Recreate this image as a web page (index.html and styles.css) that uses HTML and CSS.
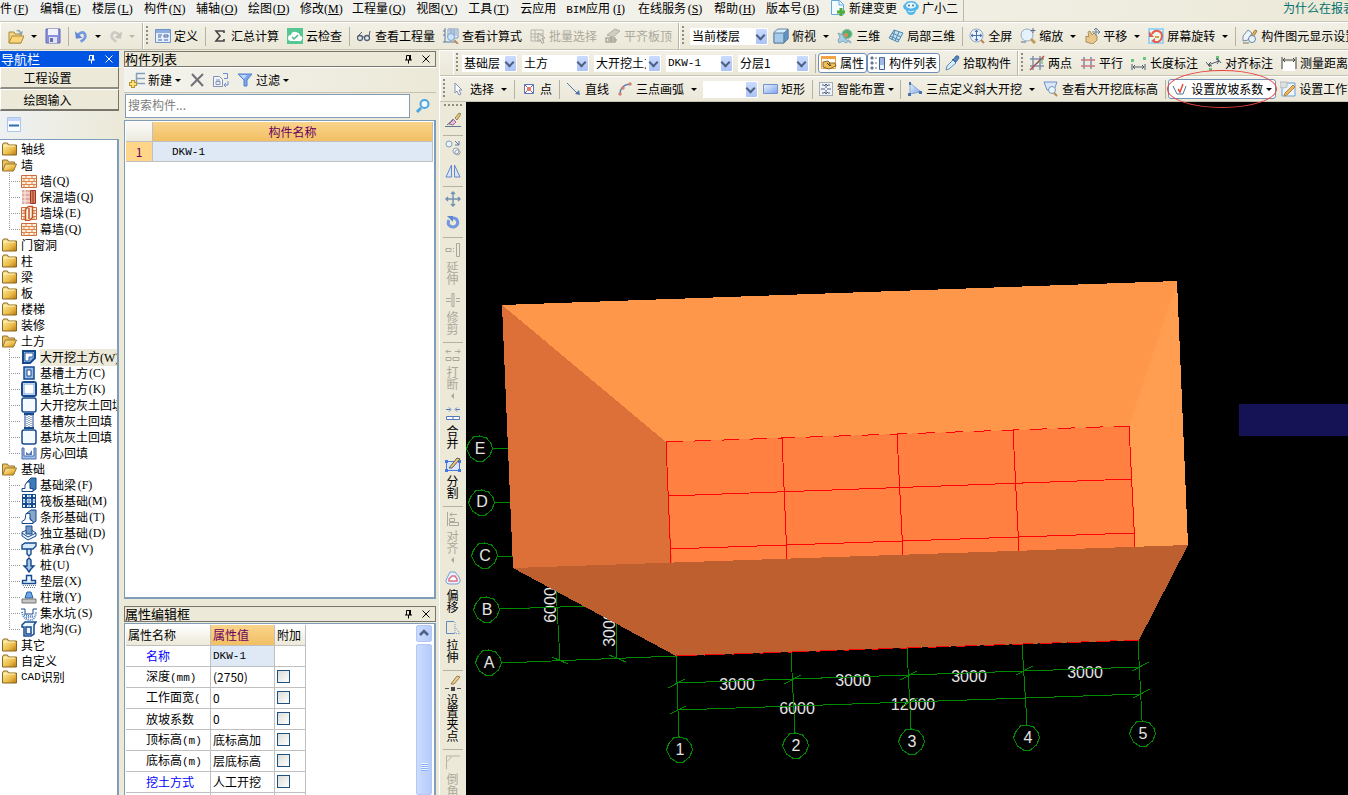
FILE: index.html
```html
<!DOCTYPE html>
<html lang="zh-CN">
<head>
<meta charset="utf-8">
<title>构件图元</title>
<link rel="stylesheet" href="styles.css">
</head>
<body>
<svg class="defs" aria-hidden="true">
<defs>
<linearGradient id="gold" x1="0" y1="0" x2="1" y2="1"><stop offset="0" stop-color="#fff0b0"/><stop offset=".6" stop-color="#ecbc48"/><stop offset="1" stop-color="#b87a10"/></linearGradient>
<linearGradient id="blue" x1="0" y1="0" x2="1" y2="1"><stop offset="0" stop-color="#e8f2ff"/><stop offset="1" stop-color="#7da2e8"/></linearGradient>
</defs>
<symbol id="open" viewBox="0 0 16 16"><path d="M1 4h5l1 2h6v9H1z" fill="#f3d483" stroke="#a98a45"/><path d="M1 15l3-7h12l-3 7z" fill="#fbd57a" stroke="#b08b3a"/><path d="M8 3q3-3 5 1l2-1-1 4-4-1 2-1q-1-2-4-2z" fill="#8ba5b5"/></symbol>
<symbol id="save" viewBox="0 0 16 16"><path d="M1 1h14v14H1z" fill="#8a8edb" stroke="#6568b5"/><path d="M3 1h10v6H3z" fill="#f1f3ff"/><path d="M4 9h8v6H4z" fill="#dfe2f0"/><path d="M5 10h3v4H5z" fill="#666cad"/></symbol>
<symbol id="undo" viewBox="0 0 14 16"><path d="M3 7q6-6 8 0q1 4-5 7" fill="none" stroke="#7599df" stroke-width="3"/><path d="M0 3l1 8 7-1z" fill="#6087d8"/></symbol>
<symbol id="redo" viewBox="0 0 14 16"><path d="M11 7q-6-6-8 0q-1 4 5 7" fill="none" stroke="#ccccc5" stroke-width="3"/><path d="M14 3l-1 8-7-1z" fill="#c5c5be"/></symbol>
<symbol id="form" viewBox="0 0 16 16"><path d="M.5 1.500h15v13H.5z" fill="#e5efff" stroke="#6e93cb"/><path d="M1 2h14v3H1z" fill="#8dadde"/><path d="M3 7h4M3 9h3M3 12h4M9 7h4v2H9zM9 12h4" fill="none" stroke="#46699c"/></symbol>
<symbol id="sigma" viewBox="0 0 16 16"><path d="M12 5V3H4l4 5-4 5h8v-2" fill="none" stroke="#444" stroke-width="1.600"/></symbol>
<symbol id="cloud" viewBox="0 0 16 16"><path d="M0 0h16v16H0z" fill="#55c795"/><path d="M4 13q-3 0-3-3t3-3q1-4 5-3t4 4q3 0 2 3t-3 2z" fill="#fff"/><path d="M5 9l2 2 4-4" fill="none" stroke="#4ab886" stroke-width="1.500"/></symbol>
<symbol id="glasses" viewBox="0 0 16 16"><circle cx="4" cy="10" r="2.500" fill="#e3ebf3" stroke="#555d70" stroke-width="1.300"/><circle cx="11" cy="10" r="2.500" fill="#e3ebf3" stroke="#555d70" stroke-width="1.300"/><path d="M6.500 9h2M2 8l4-4M13 8l1-5" stroke="#555d70" fill="none"/></symbol>
<symbol id="calc" viewBox="0 0 16 16"><path d="M2 0v14M0 14h14M2 3H0M2 7H0" stroke="#5879a8" fill="none"/><path d="M5 1h10v9H5z" fill="#e9f1fa" stroke="#8899b5"/><path d="M6 3h8M6 5h8M6 7h8M8 1v9M11 1v9" stroke="#8aa5c5" fill="none"/><circle cx="8" cy="9" r="3.500" fill="#cde3fb" stroke="#7ba5d0"/><path d="M11 12l4 4" stroke="#ba915d" stroke-width="2"/></symbol>
<symbol id="batch" viewBox="0 0 16 16"><path d="M1 2h12v11H1zM1 6h12M1 9h12M5 2v11" fill="none" stroke="#b6b4a9"/><path d="M8 5l7 5-3 .5 2 4-2 1-2-4-2 2z" fill="#e4e2d6" stroke="#aaa89d"/></symbol>
<symbol id="slab" viewBox="0 0 16 16"><path d="M2 7l8-6 5 2-7 6z" fill="#d1cec2" stroke="#b0aea4"/><path d="M1 14h9v-4H1zM3 12h9M6 9v5" fill="none" stroke="#aaa89d" stroke-width="1.500"/></symbol>
<symbol id="cube" viewBox="0 0 16 16"><path d="M1 4l4-3h10v10l-4 4H1z" fill="#d3ecfb" stroke="#6a88aa"/><path d="M1 5h10v10H1z" fill="#a5cbea" stroke="#66829e"/><path d="M11 5l4-4v10l-4 4z" fill="#5f92c8" stroke="#66829e"/></symbol>
<symbol id="orbit" viewBox="0 0 16 16"><ellipse cx="10" cy="6" rx="5" ry="4.500" fill="#4fae72" stroke="#8fb9a4"/><path d="M1 5l5 2 2 4 4 2-3 2-3-2-4 2-1-3 2-3z" fill="#a9cfe4" stroke="#7ea7c0"/><circle cx="9" cy="7" r="2" fill="#e68852"/><path d="M11 12l3 3" stroke="#96b4c7" stroke-width="2"/></symbol>
<symbol id="cubes" viewBox="0 0 16 16"><path d="M1 10l5-8 9 3-5 9z" fill="#c5e2f2" stroke="#4f88aa"/><path d="M4 5l9 4M7 2l-3 10M11 4l-4 9M2 8l9 4" stroke="#4f88aa" fill="none"/></symbol>
<symbol id="full" viewBox="0 0 16 16"><circle cx="7.500" cy="7.500" r="6.500" fill="#e9f4ff" stroke="#9aa5b8"/><path d="M7.500 2v11M2 7.500h11M6 4l1.500-2L9 4M6 11l1.500 2L9 11M4 6L2 7.500 4 9M11 6l2 1.500L11 9" fill="none" stroke="#486db1"/><path d="M12 12l3 3" stroke="#bd854e" stroke-width="2"/></symbol>
<symbol id="zoomer" viewBox="0 0 16 16"><circle cx="7" cy="7" r="6" fill="#e4f2fd" stroke="#9cabbb"/><path d="M11 11l4 4" stroke="#c09b5d" stroke-width="3"/><path d="M13 0v5M10.500 2.500h5M1 14h5" stroke="#586b87" fill="none"/></symbol>
<symbol id="pan" viewBox="0 0 16 16"><path d="M2 14V8l3 1-1-5 2-1 2 4 2-2 3 3v4l-4 4z" fill="#ebc889" stroke="#a59165"/><path d="M12 0v8M8 4h8M10 2l2-2 2 2M14 2l2 2-2 2" stroke="#6f8698" fill="none"/></symbol>
<symbol id="rotate" viewBox="0 0 16 16"><path d="M0 0h16v16H0z" fill="#9bd5f1"/><path d="M2 2h12v12H2z" fill="#edf8e9"/><path d="M4 6q2-4 6-3t4 5-4 6H6" stroke="#e65c55" stroke-width="2" fill="none"/><path d="M1 3v6h5zM3 13l4-3v5z" fill="#e65c55"/><path d="M7 9h4" stroke="#df9a3d" stroke-width="2"/></symbol>
<symbol id="show" viewBox="0 0 16 16"><path d="M1 8l5-6 4 3-4 7-5 1z" fill="#eef5f8" stroke="#718da4"/><path d="M8 10l5-8 2 1-5 8z" fill="#efba5a" stroke="#9c7a42"/><circle cx="10" cy="11" r="3.500" fill="#e7f3fb" stroke="#6685a4"/><path d="M1 15h6" stroke="#777"/></symbol>
<symbol id="prop" viewBox="0 0 16 16"><path d="M.5 1.500h14v12H.5z" fill="#fff" stroke="#f0a23b"/><path d="M0 1h15v3H0z" fill="#f2a443"/><path d="M2 7l5-1 2 2h5l1 3-7 3-6-2z" fill="#efbf55" stroke="#80662f"/><path d="M6 8l3 3M8 8l2 3" stroke="#59472a"/></symbol>
<symbol id="list" viewBox="0 0 16 16"><path d="M1 2h2v2H1zM1 7h2v2H1zM1 12h2v2H1zM5 3h2M5 8h2M5 13h2" fill="#68778e" stroke="#68778e"/><path d="M9.500 2.500h5v12h-5z" fill="#e5efff" stroke="#42628f"/><path d="M10 5h4M10 7h4M10 9h4M10 3h4" stroke="#5b84c5"/></symbol>
<symbol id="dropper" viewBox="0 0 16 16"><path d="M2 15l1-4 6-6 3 3-7 6z" fill="#d7edfb" stroke="#5e8cb4"/><path d="M8 4l4 4M9 5l3-4q3-1 3 2l-3 4z" fill="#5587bf" stroke="#3e6ca0"/></symbol>
<symbol id="two" viewBox="0 0 16 16"><path d="M4 1v14M11 1v14M1 4h14M1 11h14" stroke="#8390ad" stroke-width="1.500"/><path d="M1 15L15 1" stroke="#b44d4d" stroke-width="1.500"/><path d="M8 9l5-5v5" stroke="#55a56b" fill="none"/></symbol>
<symbol id="parallel" viewBox="0 0 16 16"><path d="M4 2v12M11 2v12" stroke="#788db4" stroke-width="1.500"/><path d="M1 5h14M1 11h14" stroke="#cf777b" stroke-width="1.500"/></symbol>
<symbol id="length" viewBox="0 0 16 16"><path d="M0 4h3v3H0zM12 2h3v3h-3z" fill="#66c779"/><path d="M1 9v6M14 9v6M2 12h11M4 10l-2 2 2 2M11 10l2 2-2 2" fill="none" stroke="#4f5c6d"/></symbol>
<symbol id="aligned" viewBox="0 0 16 16"><path d="M10 1h3v3h-3zM3 13h3v3H3z" fill="#66c779"/><path d="M0 7l4 5M11 3l4 5M2 10l11-4M5 7l-3 3 4 1M10 4l3 2-2 3" fill="none" stroke="#4f5c6d"/></symbol>
<symbol id="measure" viewBox="0 0 16 16"><path d="M2 7h12v9H2z" fill="#fff"/><path d="M1 2v12M15 2v12M2 5h12M4 3L2 5l2 2M12 3l2 2-2 2" fill="none" stroke="#444"/></symbol>
<symbol id="cursor" viewBox="0 0 16 16"><path d="M4 2v10l2-2 2 4 2-1-2-4h3z" fill="#fff" stroke="#8192b3"/></symbol>
<symbol id="point" viewBox="0 0 16 16"><path d="M3.500 3.500h9v9h-9z" fill="#fff" stroke="#6073c3"/><path d="M4 4l8 8M12 4l-8 8" stroke="#666"/><path d="M6 6h4v4H6z" fill="#e87869"/></symbol>
<symbol id="line" viewBox="0 0 16 16"><path d="M1 2l11 11" stroke="#5374a5"/><path d="M14 14l-1-5-4 4z" fill="#5374a5"/></symbol>
<symbol id="arc" viewBox="0 0 16 16"><path d="M3 13Q3 4 13 3" stroke="#6789b7" stroke-width="1.500" fill="none"/><path d="M2 12h2v2H2zM5 6h2v2H5zM12 2h2v2h-2z" fill="#f2b5a5" stroke="#cb7065"/></symbol>
<symbol id="rect" viewBox="0 0 16 16"><path d="M1.500 3.500h14v9h-14z" fill="url(#blue)" stroke="#7392d2"/></symbol>
<symbol id="smart" viewBox="0 0 16 16"><path d="M1.500 1.500h13v13h-13z" fill="#eef4fa" stroke="#59687c" stroke-dasharray="1 1"/><path d="M8 3v4M8 9v4M3 8h4M9 8h4M4 4h2M10 4h2M4 12h2M10 12h2M6 5l2-2 2 2M6 11l2 2 2-2" fill="none" stroke="#4e5f78"/></symbol>
<symbol id="slope" viewBox="0 0 16 16"><path d="M3 2v11l11-2z" fill="url(#blue)" stroke="#8ba6cd"/><path d="M2 1h2v3H2zM1 12h3v3H1zM12 10h3v3h-3z" fill="#4c70ac"/></symbol>
<symbol id="look" viewBox="0 0 16 16"><path d="M1 1h13l-3 8H4z" fill="#d9e7fb" stroke="#6e8fca"/><circle cx="9" cy="9" r="3.500" fill="#e6f4ff" stroke="#8095ae"/><path d="M11 12l3 3" stroke="#b48a57" stroke-width="2"/></symbol>
<symbol id="coef" viewBox="0 0 16 16"><path d="M1 5l4 8h6l3-8" fill="none" stroke="#51739e"/><path d="M6 8l2 3 3-8" fill="none" stroke="#e34f3c" stroke-width="1.500"/></symbol>
<symbol id="worksetup" viewBox="0 0 16 16"><path d="M2 2h13v13H2z" fill="#eaf5ff" stroke="#69a2d2"/><path d="M5 12l8-8 2 2-8 8-3 1z" fill="#edb45f" stroke="#b78443"/><path d="M0 1h7v5q-3 2-7 0z" fill="#dce1e2" stroke="#b5babc"/></symbol>
<symbol id="newdoc" viewBox="0 0 16 16"><path d="M1.500.5h8l4 4v10h-12z" fill="#f2fbff" stroke="#65a8dc"/><path d="M9 1v4h4" fill="none" stroke="#65a8dc"/><path d="M11 8v8M7 12h8" stroke="#50ad35" stroke-width="3"/></symbol>
<symbol id="bot" viewBox="0 0 16 16"><path d="M2 4Q3 1 8 1t6 3q3 1 1 5l-2 1q-1 5-5 5t-5-5L1 9Q-1 5 2 4z" fill="#51b5ec"/><ellipse cx="8" cy="5.500" rx="5" ry="3" fill="#e9f8ff"/><circle cx="6" cy="5.500" r="1" fill="#36749c"/><circle cx="10" cy="5.500" r="1" fill="#36749c"/><path d="M5 11q3 2 6 0" fill="none" stroke="#d9f3ff"/></symbol>
<symbol id="pin" viewBox="0 0 10 10"><path d="M2 6h7M3.500 6V1.500h4V6M5.500 6v3.500" fill="none" stroke="currentColor"/><path d="M6 1h2v5H6z" fill="currentColor"/></symbol>
<symbol id="close" viewBox="0 0 10 10"><path d="M1.500 1.500l7 7M8.500 1.500l-7 7" stroke="currentColor"/></symbol>
<symbol id="add" viewBox="0 0 16 16"><path d="M7 1.500h9M7 6.500h9M7 11.500h9M7.500 1v11" stroke="#84a0bb" stroke-width="1.500"/><path d="M4 8v8M0 12h8" stroke="#b9922a" stroke-width="4"/><path d="M4 9v6M1 12h6" stroke="#ffe07b" stroke-width="2"/></symbol>
<symbol id="delete" viewBox="0 0 16 16"><path d="M3 2l11 12M14 2L2 14" stroke="#707078" stroke-width="2"/></symbol>
<symbol id="copydoc" viewBox="0 0 16 16"><path d="M.5 4.500h6l3 3v7h-9zM3 8h4M3 9.500h4v3H3z" fill="#f0f4ff" stroke="#8594ad"/><path d="M10 1.500h4.500v5H11M12 13h3V9M13 11l-2 2 2 2" fill="none" stroke="#718bcd"/></symbol>
<symbol id="funnel" viewBox="0 0 16 16"><path d="M1 2h14l-5 6v6H7V8z" fill="#7da5ea" stroke="#5580cc"/><path d="M3 3h7l-3 4z" fill="#bfd7ff"/></symbol>
<symbol id="search" viewBox="0 0 16 16"><circle cx="9.500" cy="6" r="4" fill="#f3fbff" stroke="#4da4e3" stroke-width="2"/><path d="M6 10l-4 4" stroke="#4da4e3" stroke-width="3"/></symbol>
<symbol id="collapse" viewBox="0 0 16 16"><path d="M1.500.5h13v14h-13z" fill="#f8fbff" stroke="#aec5ed"/><path d="M2 1h12v3H2z" fill="#c5d8fc"/><path d="M3 8.500h10" stroke="#346fac" stroke-width="2"/></symbol>
<symbol id="folder" viewBox="0 0 16 16"><path d="M1.500 4l1-2h4l1 2h8v10h-14z" fill="url(#gold)" stroke="#87661f"/><path d="M2 5h12" stroke="#fff1b3"/></symbol>
<symbol id="fopen" viewBox="0 0 16 16"><path d="M1.500 14V3h5l1 2h6v3" fill="#eac15f" stroke="#99752c"/><path d="M1.500 14l3-7h11l-3 7z" fill="url(#gold)" stroke="#99752c"/></symbol>
<symbol id="brick" viewBox="0 0 16 16"><path d="M.5 2.500h15v12H.5z" fill="#fff2db" stroke="#cb6b3d"/><path d="M1 5.500h14M1 8.500h14M1 11.500h14M5 3v3M11 3v3M3 6v3M8 6v3M13 6v3M5 9v3M11 9v3M3 12v3M8 12v3M13 12v3" stroke="#dd8350"/></symbol>
<symbol id="warm" viewBox="0 0 16 16"><path d="M1 1h8v14H1z" fill="#dfaba2"/><path d="M1 4h8M1 8h8M1 12h8M4 1v14" stroke="#fff0e7"/><path d="M9.500 1.500h5v13h-5zM12 1v14" fill="#d98859" stroke="#9b342b"/></symbol>
<symbol id="pier" viewBox="0 0 16 16"><use href="#brick"/><path d="M4.500 4.500l3-3h4v11l-3 3h-4zM8 3v11" fill="#fff4e3" stroke="#c15428" stroke-width="1.500"/></symbol>
<symbol id="pit1" viewBox="0 0 16 16"><path d="M2 2h12v7l-5 5H2z" fill="#8fb5e0" stroke="#16498e" stroke-width="2"/><path d="M4 4h8v4H8v4H4z" fill="#fff" stroke="#2c62a5"/></symbol>
<symbol id="slot" viewBox="0 0 16 16"><path d="M3 2h10v12H3z" fill="#98bce8" stroke="#16498e" stroke-width="1.500"/><path d="M6 5h4v6H6z" fill="#fff" stroke="#16498e"/></symbol>
<symbol id="pit" viewBox="0 0 16 16"><rect x="1" y="1" width="14" height="14" rx="2" fill="#fff" stroke="#16498e" stroke-width="2"/><path d="M3 3h10v10H3z" fill="none" stroke="#79a5da"/></symbol>
<symbol id="fillpit" viewBox="0 0 16 16"><rect x="1" y="1" width="14" height="14" rx="2" fill="#f5faff" stroke="#16498e" stroke-width="1.500"/></symbol>
<symbol id="fillslot" viewBox="0 0 16 16"><path d="M4 1h8v14H4z" fill="#fff" stroke="#16498e"/><path d="M6 2v12M8 3v12M10 2v12" stroke="#385f8b" stroke-dasharray="1 1"/><path d="M3 1h10M3 15h10" stroke="#16498e" stroke-width="2"/></symbol>
<symbol id="room" viewBox="0 0 16 16"><path d="M1 3v11h14V3h-2v8H3V3z" fill="#9fbbe7" stroke="#4a6cab"/><path d="M5 7l3 2 3-4v5H5z" fill="#5579b8"/></symbol>
<symbol id="beam" viewBox="0 0 16 16"><path d="M5 6l5-5h5v11l-3 2z" fill="#3f7cb8" stroke="#16498e"/><path d="M1 14.500v-3h3V8l2-3h3v6.500h3v3z" fill="#fff" stroke="#16498e"/></symbol>
<symbol id="raft" viewBox="0 0 16 16"><path d="M1.500 1.500h13v13h-13z" fill="#eaf5ff" stroke="#16498e"/><path d="M5 1v14M11 1v14M1 5h14M1 11h14" stroke="#16498e" stroke-width="2"/><path d="M8 2v12M2 8h12" stroke="#5f8fc4"/></symbol>
<symbol id="strip" viewBox="0 0 16 16"><path d="M6 4l4-3h5v11l-3 2z" fill="#86a8c9" stroke="#16498e"/><path d="M1 14.500v-2l3-2 1-6h4v6l3 2v2z" fill="#fff" stroke="#16498e"/></symbol>
<symbol id="isolated" viewBox="0 0 16 16"><path d="M1 7l8-3 6 4v3l-8 4-6-4z" fill="#edf6ff" stroke="#16498e"/><path d="M5 1h6v8H5z" fill="#719ac2" stroke="#16498e"/><path d="M1 8l6 4 8-4" fill="none" stroke="#16498e"/></symbol>
<symbol id="cap" viewBox="0 0 16 16"><path d="M1 4l3-2h11v3l-3 3H1zM6 8h4v5l-2 2-2-2z" fill="#d8e9f9" stroke="#16498e" stroke-width="1.400"/></symbol>
<symbol id="pile" viewBox="0 0 16 16"><path d="M6 3l2-2 2 2v6h3l-3 3-2 3-2-3-3-3h3z" fill="#a4c7e7" stroke="#16498e" stroke-width="1.400"/></symbol>
<symbol id="cushion" viewBox="0 0 16 16"><path d="M5.500 2.500h5v5h4v3h-13v-3h4z" fill="#e9f4ff" stroke="#16498e" stroke-width="1.400"/><path d="M2 12.500h13M3 14.500h11" stroke="#657c99" stroke-dasharray="1 1"/></symbol>
<symbol id="pedestal" viewBox="0 0 16 16"><path d="M6 3h4l2 6H4z" fill="#6ea6e8" stroke="#235ea0"/><path d="M1 10h14v4H1z" fill="#c5c5c5" stroke="#777"/></symbol>
<symbol id="sump" viewBox="0 0 16 16"><path d="M0 4h4v5h8V4h4" fill="none" stroke="#16498e"/><path d="M1 7q1 7 7 8t7-8M3 10l9 2M5 13l7-2" fill="none" stroke="#4c7ebd" stroke-width="2" stroke-dasharray="1 1"/></symbol>
<symbol id="trench" viewBox="0 0 16 16"><path d="M1 4l3-3h11l-2 3v9l-3 2H3V6H1zM5 6h5v7H5z" fill="#edf6ff" stroke="#16498e" stroke-width="1.500"/></symbol>
<symbol id="erase" viewBox="0 0 16 16"><path d="M0 14.500h16" stroke="#62789b"/><path d="M10 6l4-5 2 1-4 6z" fill="#f1ca68" stroke="#8a8264"/><path d="M8 7l3 3-3 3-4-1z" fill="#f3b9d6" stroke="#8d7493"/><path d="M2 13l6-5" stroke="#5c6680"/></symbol>
<symbol id="copy" viewBox="0 0 16 16"><circle cx="4" cy="4" r="3" fill="#eef5ff" stroke="#849ac0"/><circle cx="11" cy="11" r="3" fill="#eef5ff" stroke="#98a0ac"/><circle cx="12.500" cy="12.500" r="2.500" fill="none" stroke="#98a0ac"/><path d="M10 1l4 4M14 1v4h-4" stroke="#567cae" fill="none"/></symbol>
<symbol id="mirror" viewBox="0 0 16 16"><path d="M6.500 2v12H1zM9.500 2v12H15z" fill="#d7e5ff" stroke="#6687ca"/></symbol>
<symbol id="move" viewBox="0 0 16 16"><path d="M8 1v14M1 8h14M6 3l2-2 2 2M6 13l2 2 2-2M3 6L1 8l2 2M13 6l2 2-2 2" fill="none" stroke="#7290b1" stroke-width="1.400"/></symbol>
<symbol id="turn" viewBox="0 0 16 16"><path d="M4 6q-2 4 1 6t6 0q3-3 1-6-1-2-4-2" fill="none" stroke="#7296df" stroke-width="3"/><path d="M2 2h6v6z" fill="#6186d0"/></symbol>
<symbol id="extend" viewBox="0 0 16 16"><path d="M1 6.500h5v3H1zM8 6.500h1M8 9.500h1M11.500 1.500h3v13h-3z" fill="none" stroke="#aaa89d"/></symbol>
<symbol id="trim" viewBox="0 0 16 16"><path d="M1 6.500h5M1 9.500h5M11 6.500h4M11 9.500h4M7 1.500h2v13H7z" fill="none" stroke="#aaa89d"/></symbol>
<symbol id="break" viewBox="0 0 16 16"><path d="M1 4.500h5M10 4.500h5M3 2.500l-2 2 2 2M13 2.500l2 2-2 2M1 10.500h5v3H1zM8 10.500h6v3H8z" fill="none" stroke="#aaa89d"/></symbol>
<symbol id="merge" viewBox="0 0 16 16"><path d="M1 3.500h4M15 3.500h-4M4 1.500l2 2-2 2M12 1.500l-2 2 2 2M1.500 10.500h13v3h-13zM8 10v3" fill="#fff" stroke="#5278bb"/></symbol>
<symbol id="split" viewBox="0 0 16 16"><path d="M1.500 5.500h13v9h-13z" fill="#d8e7ff" stroke="#4776dc"/><path d="M0 4h3v3H0zM0 13h3v3H0zM13 4h3v3h-3zM13 13h3v3h-3z" fill="#4776dc"/><path d="M4 12l8-10 3 1-8 9z" fill="#efc575" stroke="#5e5c58"/></symbol>
<symbol id="align" viewBox="0 0 16 16"><path d="M2.500 1v14M5 3.500h7M7 1.500l-2 2 2 2M4.500 7.500h5v3h-5zM4.500 11.500h9v3h-9z" fill="none" stroke="#aaa89d"/></symbol>
<symbol id="offset" viewBox="0 0 16 16"><path d="M5 2h5l4 5q3 6-2 7H4q-5-1-2-6z" fill="#e6f1ff" stroke="#7e9dcd"/><path d="M7 6h3l2 3v2H4V9z" fill="#fff" stroke="#dd7185" stroke-width="1.500"/></symbol>
<symbol id="stretch" viewBox="0 0 16 16"><path d="M9 1.500H1.500v12H9" fill="none" stroke="#5f8ac4"/><path d="M10 2v12M9 13.500h6L10 7" fill="none" stroke="#779acc" stroke-dasharray="1 1"/></symbol>
<symbol id="grippt" viewBox="0 0 16 16"><path d="M0 13.500h4M12 13.500h4" stroke="#555"/><path d="M6 12h4v4H6z" fill="#444"/><path d="M6 9l6-8 3 1-6 7z" fill="#f2d18a" stroke="#98784b"/></symbol>
<symbol id="chamfer" viewBox="0 0 16 16"><path d="M1.500 15V8l6-6H15M1.500 7V2H7" fill="none" stroke="#b4b2a7"/></symbol>
</svg>

<div class="app">
<header>
<nav class="menu">
<div class="menu-items">
<button>件<span class="key">(<u>F</u>)</span></button><button>编辑<span class="key">(<u>E</u>)</span></button><button>楼层<span class="key">(<u>L</u>)</span></button><button>构件<span class="key">(<u>N</u>)</span></button><button>辅轴<span class="key">(<u>O</u>)</span></button><button>绘图<span class="key">(<u>D</u>)</span></button><button>修改<span class="key">(<u>M</u>)</span></button><button>工程量<span class="key">(<u>Q</u>)</span></button><button>视图<span class="key">(<u>V</u>)</span></button><button>工具<span class="key">(<u>T</u>)</span></button><button>云应用</button><button><span class="mono">BIM</span>应用<span class="key">(<u>I</u>)</span></button><button>在线服务<span class="key">(<u>S</u>)</span></button><button>帮助<span class="key">(<u>H</u>)</span></button><button>版本号<span class="key">(<u>B</u>)</span></button><button class="pic"><svg><use href="#newdoc"/></svg>新建变更</button><button class="pic"><svg><use href="#bot"/></svg>广小二</button>
</div>
<a class="hint" href="#faq">为什么在报表</a>
</nav>
<div class="bar top">
<div class="group first">
<button class="tb" aria-label="打开"><svg><use href="#open"/></svg><i class="arr"></i></button>
<button class="tb" aria-label="保存"><svg><use href="#save"/></svg></button><span class="sep"></span>
<button class="tb" aria-label="撤销"><svg class="narrow"><use href="#undo"/></svg><i class="arr"></i></button>
<button class="tb" aria-label="恢复" disabled><svg class="narrow"><use href="#redo"/></svg><i class="arr"></i></button>
</div>
<div class="group"><span class="grip"></span>
<button class="tb"><svg><use href="#form"/></svg>定义</button><span class="sep"></span>
<button class="tb"><svg><use href="#sigma"/></svg>汇总计算</button>
<button class="tb"><svg><use href="#cloud"/></svg>云检查</button><span class="sep"></span>
<button class="tb"><svg><use href="#glasses"/></svg>查看工程量</button>
<button class="tb"><svg><use href="#calc"/></svg>查看计算式</button>
<button class="tb" disabled><svg><use href="#batch"/></svg>批量选择</button>
<button class="tb" disabled><svg><use href="#slab"/></svg>平齐板顶</button>
</div>
<div class="group last"><span class="grip"></span>
<span class="combo w78"><select aria-label="楼层范围"><option>当前楼层</option></select></span>
<button class="tb"><svg><use href="#cube"/></svg>俯视<i class="arr"></i></button>
<button class="tb"><svg><use href="#orbit"/></svg>三维</button>
<button class="tb"><svg><use href="#cubes"/></svg>局部三维</button><span class="sep"></span>
<button class="tb"><svg><use href="#full"/></svg>全屏</button>
<button class="tb"><svg><use href="#zoomer"/></svg>缩放<i class="arr"></i></button>
<button class="tb"><svg><use href="#pan"/></svg>平移<i class="arr"></i></button>
<button class="tb"><svg><use href="#rotate"/></svg>屏幕旋转<i class="arr"></i></button><span class="sep"></span>
<button class="tb"><svg><use href="#show"/></svg>构件图元显示设置</button>
</div>
</div>
</header>

<main class="body">
<aside class="nav">
<h2 class="title active"><span>导航栏</span><button aria-label="固定"><svg><use href="#pin"/></svg></button><button aria-label="关闭"><svg><use href="#close"/></svg></button></h2>
<button class="tab">工程设置</button>
<button class="tab pressed">绘图输入</button>
<div class="navtools"><button aria-label="折叠"><svg><use href="#collapse"/></svg></button></div>
<ul class="tree">
<li><a href="#t"><svg><use href="#folder"/></svg>轴线</a></li>
<li><a href="#t"><svg><use href="#fopen"/></svg>墙</a>
<ul>
<li><a href="#t"><svg><use href="#brick"/></svg>墙<span class="key">(Q)</span></a></li>
<li><a href="#t"><svg><use href="#warm"/></svg>保温墙<span class="key">(Q)</span></a></li>
<li><a href="#t"><svg><use href="#pier"/></svg>墙垛<span class="key">(E)</span></a></li>
<li><a href="#t"><svg><use href="#brick"/></svg>幕墙<span class="key">(Q)</span></a></li>
</ul></li>
<li><a href="#t"><svg><use href="#folder"/></svg>门窗洞</a></li>
<li><a href="#t"><svg><use href="#folder"/></svg>柱</a></li>
<li><a href="#t"><svg><use href="#folder"/></svg>梁</a></li>
<li><a href="#t"><svg><use href="#folder"/></svg>板</a></li>
<li><a href="#t"><svg><use href="#folder"/></svg>楼梯</a></li>
<li><a href="#t"><svg><use href="#folder"/></svg>装修</a></li>
<li><a href="#t"><svg><use href="#fopen"/></svg>土方</a>
<ul>
<li><a href="#t"><svg><use href="#pit1"/></svg><span class="sel">大开挖土方<span class="key">(W)</span></span></a></li>
<li><a href="#t"><svg><use href="#slot"/></svg>基槽土方<span class="key">(C)</span></a></li>
<li><a href="#t"><svg><use href="#pit"/></svg>基坑土方<span class="key">(K)</span></a></li>
<li><a href="#t"><svg><use href="#fillpit"/></svg>大开挖灰土回填</a></li>
<li><a href="#t"><svg><use href="#fillslot"/></svg>基槽灰土回填</a></li>
<li><a href="#t"><svg><use href="#fillpit"/></svg>基坑灰土回填</a></li>
<li><a href="#t"><svg><use href="#room"/></svg>房心回填</a></li>
</ul></li>
<li><a href="#t"><svg><use href="#fopen"/></svg>基础</a>
<ul>
<li><a href="#t"><svg><use href="#beam"/></svg>基础梁<span class="key">(F)</span></a></li>
<li><a href="#t"><svg><use href="#raft"/></svg>筏板基础<span class="key">(M)</span></a></li>
<li><a href="#t"><svg><use href="#strip"/></svg>条形基础<span class="key">(T)</span></a></li>
<li><a href="#t"><svg><use href="#isolated"/></svg>独立基础<span class="key">(D)</span></a></li>
<li><a href="#t"><svg><use href="#cap"/></svg>桩承台<span class="key">(V)</span></a></li>
<li><a href="#t"><svg><use href="#pile"/></svg>桩<span class="key">(U)</span></a></li>
<li><a href="#t"><svg><use href="#cushion"/></svg>垫层<span class="key">(X)</span></a></li>
<li><a href="#t"><svg><use href="#pedestal"/></svg>柱墩<span class="key">(Y)</span></a></li>
<li><a href="#t"><svg><use href="#sump"/></svg>集水坑<span class="key">(S)</span></a></li>
<li><a href="#t"><svg><use href="#trench"/></svg>地沟<span class="key">(G)</span></a></li>
</ul></li>
<li><a href="#t"><svg><use href="#folder"/></svg>其它</a></li>
<li><a href="#t"><svg><use href="#folder"/></svg>自定义</a></li>
<li><a href="#t"><svg><use href="#folder"/></svg><span class="mono">CAD</span>识别</a></li>
</ul>
</aside>

<section class="panels">
<h2 class="title"><span>构件列表</span><button aria-label="固定"><svg><use href="#pin"/></svg></button><button aria-label="关闭"><svg><use href="#close"/></svg></button></h2>
<div class="listtools">
<button class="tb tight"><svg><use href="#add"/></svg>新建<i class="arr"></i></button>
<button class="tb" aria-label="删除"><svg><use href="#delete"/></svg></button>
<button class="tb" aria-label="复制"><svg><use href="#copydoc"/></svg></button>
<button class="tb tight"><svg><use href="#funnel"/></svg>过滤<i class="arr"></i></button>
</div>
<div class="find"><input type="text" placeholder="搜索构件..." aria-label="搜索构件"><button aria-label="搜索"><svg><use href="#search"/></svg></button></div>
<div class="listbox">
<table class="list"><thead><tr><th class="num"></th><th>构件名称</th></tr></thead>
<tbody><tr><td class="num">1</td><td class="name mono">DKW-1</td></tr></tbody></table>
</div>
<h2 class="title second"><span>属性编辑框</span><button aria-label="固定"><svg><use href="#pin"/></svg></button><button aria-label="关闭"><svg><use href="#close"/></svg></button></h2>
<div class="propbox">
<table class="props">
<colgroup><col class="c1"><col class="c2"><col class="c3"></colgroup>
<thead><tr><th>属性名称</th><th class="hot">属性值</th><th>附加</th></tr></thead>
<tbody>
<tr><td class="link">名称</td><td class="cur mono">DKW-1</td><td></td></tr>
<tr><td>深度<span class="mono">(mm)</span></td><td>(2750)</td><td><input type="checkbox" aria-label="深度附加"></td></tr>
<tr><td>工作面宽<span class="mono">(</span></td><td>0</td><td><input type="checkbox" aria-label="工作面宽附加"></td></tr>
<tr><td>放坡系数</td><td>0</td><td><input type="checkbox" aria-label="放坡系数附加"></td></tr>
<tr><td>顶标高<span class="mono">(m)</span></td><td>底标高加</td><td><input type="checkbox" aria-label="顶标高附加"></td></tr>
<tr><td>底标高<span class="mono">(m)</span></td><td>层底标高</td><td><input type="checkbox" aria-label="底标高附加"></td></tr>
<tr><td class="link">挖土方式</td><td>人工开挖</td><td><input type="checkbox" aria-label="挖土方式附加"></td></tr>
<tr><td></td><td></td><td></td></tr>
</tbody></table>
<div class="scroll"><button aria-label="向上"><svg viewBox="0 0 12 12"><path d="M2 8l4-4 4 4" fill="none" stroke="#4d6185" stroke-width="2.500"/></svg></button><div class="thumb"><i></i></div></div>
</div>
</section>

<section class="work">
<div class="bar mid">
<div class="group inset"><span class="grip"></span>
<span class="combo w55"><select aria-label="楼层"><option>基础层</option></select></span>
<span class="combo w67"><select aria-label="类别"><option>土方</option></select></span>
<span class="combo w67"><select aria-label="构件类型"><option>大开挖土方</option></select></span>
<span class="combo w67"><select class="mono" aria-label="构件"><option>DKW-1</option></select></span>
<span class="combo w71"><select aria-label="分层"><option>分层1</option></select></span>
<span class="sep"></span>
<button class="tb on"><svg><use href="#prop"/></svg>属性</button>
<button class="tb on"><svg><use href="#list"/></svg>构件列表</button>
<button class="tb"><svg><use href="#dropper"/></svg>拾取构件</button>
</div>
<div class="group last"><span class="grip"></span>
<button class="tb"><svg><use href="#two"/></svg>两点</button>
<button class="tb"><svg><use href="#parallel"/></svg>平行</button>
<button class="tb"><svg><use href="#length"/></svg>长度标注</button>
<button class="tb"><svg><use href="#aligned"/></svg>对齐标注</button>
<button class="tb"><svg><use href="#measure"/></svg>测量距离</button>
</div>
</div>
<div class="bar low">
<div class="group last"><span class="grip"></span>
<button class="tb"><svg><use href="#cursor"/></svg>选择<i class="arr"></i></button><span class="sep"></span>
<button class="tb"><svg><use href="#point"/></svg>点</button><span class="sep"></span>
<button class="tb"><svg><use href="#line"/></svg>直线</button>
<button class="tb"><svg><use href="#arc"/></svg>三点画弧<i class="arr"></i></button>
<span class="combo w55"><select aria-label="画弧方式"><option></option></select></span>
<button class="tb"><svg><use href="#rect"/></svg>矩形</button><span class="sep"></span>
<button class="tb tight"><svg><use href="#smart"/></svg>智能布置<i class="arr"></i></button><span class="sep"></span>
<button class="tb"><svg><use href="#slope"/></svg>三点定义斜大开挖<i class="arr"></i></button>
<button class="tb"><svg><use href="#look"/></svg>查看大开挖底标高</button><span class="sep"></span>
<button class="tb on tight circled"><svg><use href="#coef"/></svg>设置放坡系数<i class="arr"></i></button>
<button class="tb"><svg><use href="#worksetup"/></svg>设置工作面</button>
</div>
</div>
<div class="stage">
<div class="side">
<span class="hgrip"></span>
<button aria-label="删除"><svg><use href="#erase"/></svg></button><hr>
<button aria-label="复制"><svg><use href="#copy"/></svg></button>
<button aria-label="镜像"><svg><use href="#mirror"/></svg></button><hr>
<button aria-label="移动"><svg><use href="#move"/></svg></button>
<button aria-label="旋转"><svg><use href="#turn"/></svg></button><hr>
<button disabled><svg><use href="#extend"/></svg><span>延伸</span></button>
<button disabled><svg><use href="#trim"/></svg><span>修剪</span></button><hr>
<button disabled><svg><use href="#break"/></svg><span>打断</span><i class="left"></i></button>
<button><svg><use href="#merge"/></svg><span>合并</span></button>
<button><svg><use href="#split"/></svg><span>分割</span></button><hr>
<button disabled><svg><use href="#align"/></svg><span>对齐</span><i class="left"></i></button>
<button><svg><use href="#offset"/></svg><span>偏移</span></button>
<button><svg><use href="#stretch"/></svg><span>拉伸</span></button><hr>
<button><svg><use href="#grippt"/></svg><span>设置夹点</span></button><hr>
<button disabled><svg><use href="#chamfer"/></svg><span>倒角</span></button>
</div>
<svg class="view" viewBox="466 102 882 693" preserveAspectRatio="xMinYMin slice" role="img" aria-label="三维视图">
<path d="M1239 404h200v32h-200z" fill="#151356"/>
<g class="dim">
<text transform="translate(556 605) rotate(-90)">6000</text>
<text transform="translate(615 629) rotate(-90)">3000</text>
<text x="737" y="690">3000</text><text x="853" y="686">3000</text><text x="969" y="682">3000</text><text x="1085" y="678">3000</text>
<text x="797" y="714">6000</text><text x="913" y="710">12000</text>
</g>
<g class="axis">
<path d="M492 449l16-1M495 502h16M497 556h17M500 609l90-3M502 663l174-7M556 588l4 72M616 620l1 38M552 657l16 7M609 655l17 7"/>
<path d="M676 656l3 81M791 652l4 81M907 648l4 81M1022 644l5 80M1138 640l4 80"/>
<path d="M677 683l463-16M678 710l463-16M668 688l17-9M784 684l17-9M900 680l17-9M1016 675l17-9M1132 671l17-9M670 714l16-8M902 706l16-8M1133 698l17-9"/>
<path id="ring" d="M479.500 436l7 2 5 6 1 5-3 7-6 5h-7l-6-4-4-8 2-6 5-6z"/>
<use href="#ring" x="2" y="54"/><use href="#ring" x="5" y="107"/><use href="#ring" x="7" y="161"/><use href="#ring" x="9" y="214"/>
<use href="#ring" x="200" y="301"/><use href="#ring" x="316" y="297"/><use href="#ring" x="432" y="293"/><use href="#ring" x="547" y="289"/><use href="#ring" x="663" y="285"/>
</g>
<g class="mark">
<text x="480" y="454">E</text><text x="482" y="507">D</text><text x="485" y="561">C</text><text x="487" y="615">B</text><text x="489" y="668">A</text>
<text x="680" y="755">1</text><text x="796" y="751">2</text><text x="912" y="747">3</text><text x="1028" y="743">4</text><text x="1143" y="739">5</text>
</g>
<g shape-rendering="crispEdges">
<path d="M502 305l675-24-48 145-463 16z" fill="#ff974b"/>
<path d="M502 305l164 137 6 122-159 4z" fill="#dc7038"/>
<path d="M1177 281l11 264-54 2-5-121z" fill="#ff9e50"/>
<path d="M666 442l463-16 6 122-463 16z" fill="#ff8040"/>
<g fill="none" stroke="#f00">
<path d="M666 442l463-16" stroke-dasharray="17 11"/>
<path d="M666 442l5 121M782 438l5 121M897 434l6 121M1013 430l6 121M1129 426l6 121M668 496l464-17M670 549l464-16"/>
</g>
<path d="M513 568l675-23-49 95-463 16z" fill="#be5f2f"/>
<path d="M676 656l463-16" fill="none" stroke="#f00" stroke-dasharray="21 7"/>
</g>
</svg>
</div>
</section>
</main>
</div>
</body>
</html>
```

FILE: styles.css
```css
* { box-sizing: border-box; }

body {
  margin: 0;
  font: 12px/16px "Noto Sans CJK SC", sans-serif;
  color: #000;
  background: #ece9d8;
  overflow: hidden;
}

button, input, select {
  font: inherit;
  color: inherit;
  margin: 0;
  padding: 0;
  border: 0;
  background: none;
  border-radius: 0;
  white-space: nowrap;
}

a { color: inherit; text-decoration: none; }
svg { display: block; flex: none; width: 16px; height: 16px; }
.defs { position: absolute; width: 0; height: 0; }
.mono { font-family: "Liberation Mono", "Noto Sans CJK SC", monospace; font-size: 11px; }
.key {
  display: inline-block;
  width: 18px;
  text-align: center;
  font-family: "Liberation Serif", serif;
}

.app { display: flex; flex-direction: column; height: 100vh; }
header { flex: none; }

/* Menu */
.menu {
  display: flex;
  justify-content: space-between;
  height: 22px;
  background: linear-gradient(90deg, #f0f2f1, #f2f1e9 60%, #ece9d8);
  border-bottom: 1px solid #c8c5b5;
  overflow: hidden;
}
.menu-items { display: flex; gap: 10px; align-items: flex-start; padding-right: 5px; border-right: 1px solid #bbb8a8; }
.menu-items .pic { display: flex; gap: 3px; align-items: center; }
.menu-items .pic + .pic { margin-left: -4px; }
.hint { flex: none; width: 65px; overflow: hidden; white-space: nowrap; color: #007070; }

/* Toolbars */
.bar { display: flex; height: 26px; flex: none; overflow: hidden; border-top: 1px solid #fff; border-bottom: 1px solid #c5c2b2; background: linear-gradient(#f2f0e6, #ebe8d8); }
.top { height: 28px; }
.group { display: flex; align-items: center; flex: none; padding: 0 2px; border-right: 1px solid #b9b6a6; border-left: 1px solid #fff; }
.first { padding: 0 3px; }
.last { border-right: 0; }
.inset { margin-left: 13px; }
.grip { width: 3px; height: 20px; margin-right: 2px; background: radial-gradient(circle at 1px 1px, #8f8d82 1px, transparent 1px) 0 0 / 3px 4px; }
.sep { width: 1px; height: 19px; margin: 0 2px 0 3px; background: #b5b2a2; }
.tb { display: flex; align-items: center; gap: 3px; height: 20px; padding: 0 4px; }
.tb .narrow { width: 13px; }
.tb:disabled, .side button:disabled { color: #aca899; }
.tb:disabled .arr { color: #bbb9ac; }
.arr { width: 0; height: 0; margin-left: 4px; border: 3px solid transparent; border-top-color: currentColor; border-bottom: 0; }
.tight .arr { margin-left: 0; }
.on { background: #fff; border: 1px solid #6f8fb4; border-radius: 3px; padding: 0 2px; }
.circled { position: relative; }
.circled::after { content: ""; position: absolute; inset: -10px -2px; border: 1px solid #e8423f; border-radius: 50%; }
.low, .low .group { overflow: visible; }
.low { z-index: 1; }
.low .grip { margin-right: 1px; }
.low .tight { padding: 0 3px; }

.combo { position: relative; display: flex; height: 17px; margin: 0 1px 0 3px; background: #fff; }
.combo select { width: 100%; appearance: none; padding: 0 15px 0 2px; line-height: 16px; overflow: hidden; }
.combo::after {
  content: "";
  position: absolute;
  right: 1px; top: 1px; bottom: 1px;
  width: 11px;
  border-radius: 1px;
  pointer-events: none;
  background: linear-gradient(#cbdcff, #aac2f5);
}
.combo::before {
  content: "";
  position: absolute;
  z-index: 1;
  right: 4px; top: 4px;
  width: 5px; height: 5px;
  border: solid #4d6185;
  border-width: 0 2px 2px 0;
  transform: rotate(45deg);
  pointer-events: none;
}
.w55 { width: 55px; }
.w67 { width: 67px; }
.w71 { width: 71px; }
.w78 { width: 78px; }
.mid .combo { margin: 0 3px 0 2px; }
.mid .grip { margin-right: 1px; }
.low .combo { margin: 0 0 0 2px; }

/* Columns */
.body { display: flex; flex: 1; min-height: 0; }
.title {
  display: flex;
  align-items: center;
  gap: 8px;
  height: 16px;
  flex: none;
  margin: 1px 0 0;
  padding-right: 4px;
  border: 1px solid #77756c;
  font-size: 13px;
  font-weight: 400;
  line-height: 14px;
}
.title span { flex: 1; }
.title svg { width: 10px; height: 10px; }
.title.active { background: #0054e3; color: #fff; border-color: #0054e3; }

.nav { display: flex; flex-direction: column; width: 120px; flex: none; padding-right: 1px; }
.tab { flex: none; height: 22px; padding-right: 24px; background: #ece9d8; border: 1px solid #fff; border-right-color: #77756c; border-bottom: 2px solid #8f8c80; }
.pressed { border-bottom-color: #77756c; }
.navtools { flex: none; height: 28px; padding: 6px; background: linear-gradient(100deg, #eef1f2, #ece9d8); }
.tree, .tree ul { list-style: none; margin: 0; padding: 0; }
.tree { flex: 1; background: #fff; border: solid #7f9db9; border-width: 1px 2px 0 0; padding-top: 1px; overflow: hidden; }
.tree a { display: flex; align-items: center; height: 16px; padding-left: 1px; white-space: nowrap; }
.tree svg { margin-right: 4px; }
.tree ul li { display: flex; padding-left: 9px; height: 16px; }
.tree ul li::before {
  content: "";
  flex: none;
  width: 11px;
  height: 16px;
  background:
    repeating-linear-gradient(#999 0 1px, transparent 1px 2px) 0 0 / 1px 100% no-repeat,
    repeating-linear-gradient(90deg, #999 0 1px, transparent 1px 2px) 0 8px / 100% 1px no-repeat;
}
.tree ul li:last-child::before { background-size: 1px 9px, 100% 1px; }
.tree ul svg { margin-right: 3px; }
.sel { background: #ece9d8; }

.panels { display: flex; flex-direction: column; width: 312px; flex: none; margin-left: 4px; }
.listtools { display: flex; align-items: center; flex: none; height: 26px; padding: 0 1px; background: linear-gradient(90deg, #f3f3ee, #ece9d8); border-top: 1px solid #fff; border-bottom: 1px solid #c5c2b2; }
.find { display: flex; flex: none; height: 26px; padding: 1px; gap: 5px; align-items: center; }
.find input { flex: 1; height: 24px; border: 1px solid #7f9db9; background: #fff; padding: 0 2px 3px; }
.find input::placeholder { color: #808080; opacity: 1; }
.find button { padding-right: 4px; }
.listbox { flex: none; height: 60.2vh; margin-top: 1px; background: #fff; border: 2px solid #7f9db9; border-width: 1px 2px 2px 1px; padding: 1px; }
table { border-collapse: separate; border-spacing: 0; table-layout: fixed; }
th { font-weight: 400; }
.list { width: 100%; }
.list th, .list td { height: 20px; padding: 0; border: solid #c0c0c0; border-width: 0 1px 1px 0; line-height: 16px; }
.list th { background: linear-gradient(#f9d48c, #f2bf63); color: #6a0060; }
.list th.num { width: 27px; background: linear-gradient(#fbfaf7, #eceadf); }
.list td.num { background: #ffd58a; color: #6a0060; text-align: center; }
.list td.name { background: #dfe9f6; padding-left: 19px; }
.title.second { margin-top: 7px; }
.propbox { display: flex; justify-content: space-between; flex: 1; min-height: 0; overflow: hidden; margin-top: 1px; padding: 1px 1px 0; background: #fff; border: 2px solid #7f9db9; border-width: 1px 2px 0 1px; }
.props { width: 180px; flex: none; align-self: flex-start; }
.c1 { width: 85px; }
.c2 { width: 64px; }
.props th, .props td { height: 21px; padding: 0 0 0 2px; text-align: left; white-space: nowrap; overflow: hidden; line-height: 16px; border: solid #c0c0c0; border-width: 0 1px 1px 0; }
.props th { background: linear-gradient(#fff, #ece9d8); }
.props .hot { background: linear-gradient(#f9d48c, #f2bf63); color: #6a0060; }
.props td:first-child { padding-left: 20px; }
.props .link { color: #00f; }
.props .cur { background: #dfe9f6; }
.props input { appearance: none; display: block; width: 13px; height: 13px; border: 1px solid #1c5180; background: linear-gradient(135deg, #dcdcd7, #fff); }
.scroll { display: flex; flex-direction: column; gap: 2px; width: 16px; flex: none; margin-right: 1px; }
.scroll button, .thumb { border: 1px solid #b4c8f6; border-radius: 2px; background: linear-gradient(90deg, #cbdcff, #b6cbfa); }
.scroll button { flex: none; height: 17px; padding: 1px; }
.scroll svg { width: 12px; height: 12px; }
.thumb { display: flex; flex: 1; justify-content: center; padding-top: 118px; }
.thumb i { width: 7px; height: 8px; background: repeating-linear-gradient(#eef4fe 0 1px, #8cb0f8 1px 2px); }

/* Work area */
.work { display: flex; flex-direction: column; flex: 1; min-width: 0; margin-left: 3px; border-left: 1px solid #fff; }
.stage { display: flex; flex: 1; min-height: 0; }
.side { display: flex; flex-direction: column; align-items: center; width: 26px; flex: none; overflow: hidden; padding: 2px 1px 0 0; }
.hgrip { flex: none; height: 3px; margin-bottom: 2px; background: radial-gradient(circle at 1px 1px, #8f8d82 1px, transparent 1px) 0 0 / 4px 3px; }
.side button { display: flex; flex-direction: column; align-items: center; flex: none; gap: 3px; padding: 3px 0 4px; }
.side span { width: 12px; line-height: 12px; white-space: normal; word-break: break-all; }
.side .hgrip { width: 18px; }
.side hr { flex: none; width: 20px; height: 1px; margin: 3px 0 1px; border: 0; background: #b5b2a2; }
.left { width: 0; height: 5px; border: 3px solid transparent; border-right-color: currentColor; border-left: 0; }
.view { flex: 1; min-width: 0; width: auto; height: auto; background: #000; }
.view text { font-family: "Liberation Sans", Arial, sans-serif; font-size: 16px; fill: #e4e4e4; text-anchor: middle; }
.axis { fill: none; stroke: #008a00; shape-rendering: crispEdges; }
```
